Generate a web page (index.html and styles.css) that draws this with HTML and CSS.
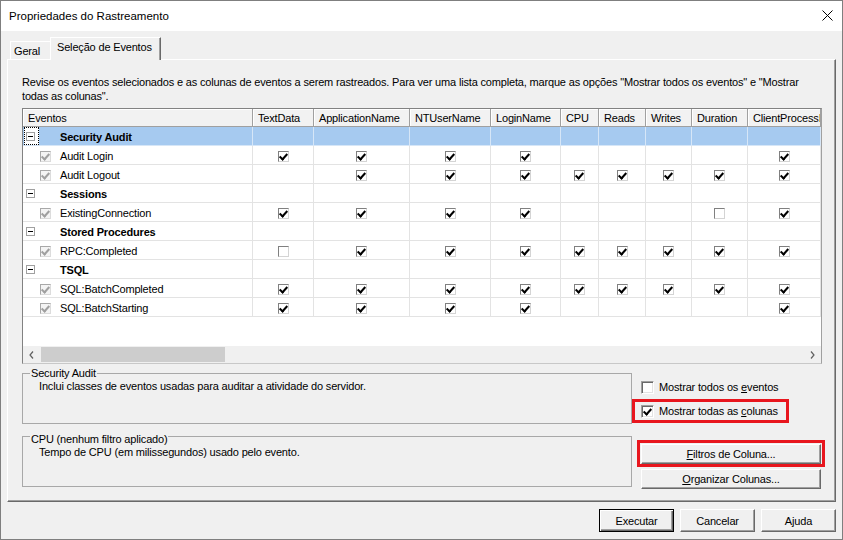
FILE: index.html
```html
<!DOCTYPE html>
<html lang="pt">
<head>
<meta charset="utf-8">
<title>Propriedades do Rastreamento</title>
<link rel="stylesheet" href="styles.css">
</head>
<body>
<div class="window">
  <div class="titlebar">
    <span class="title">Propriedades do Rastreamento</span>
    <svg class="close" width="11" height="11" viewBox="0 0 11 11"><path d="M0.5 0.5L10.5 10.5M10.5 0.5L0.5 10.5" stroke="#000" stroke-width="1" fill="none"/></svg>
  </div>
  <div class="tabs">
    <div class="tab">Geral</div>
    <div class="tab sel">Seleção de Eventos</div>
  </div>
  <div class="panel">
    <p class="desc">Revise os eventos selecionados e as colunas de eventos a serem rastreados. Para ver uma lista completa, marque as opções "Mostrar todos os eventos" e "Mostrar<br>todas as colunas".</p>
    <div class="grid">
      <div class="row head">
        <div>Eventos</div><div>TextData</div><div>ApplicationName</div><div>NTUserName</div><div>LoginName</div><div>CPU</div><div>Reads</div><div>Writes</div><div>Duration</div><div>ClientProcessID</div>
      </div>
      <div class="row sel">
        <div class="c0"><span class="exp focus"><span class="mn"></span></span><b class="gname">Security Audit</b></div><div></div><div></div><div></div><div></div><div></div><div></div><div></div><div></div><div></div>
      </div>
      <div class="row">
        <div class="c0"><span class="exp"></span><span class="cb dis on"></span><span class="nm">Audit Login</span></div><div><span class="cb on"></span></div><div><span class="cb on"></span></div><div><span class="cb on"></span></div><div><span class="cb on"></span></div><div></div><div></div><div></div><div></div><div><span class="cb on"></span></div>
      </div>
      <div class="row">
        <div class="c0"><span class="exp"></span><span class="cb dis on"></span><span class="nm">Audit Logout</span></div><div></div><div><span class="cb on"></span></div><div><span class="cb on"></span></div><div><span class="cb on"></span></div><div><span class="cb on"></span></div><div><span class="cb on"></span></div><div><span class="cb on"></span></div><div><span class="cb on"></span></div><div><span class="cb on"></span></div>
      </div>
      <div class="row">
        <div class="c0"><span class="exp"><span class="mn"></span></span><b class="gname">Sessions</b></div><div></div><div></div><div></div><div></div><div></div><div></div><div></div><div></div><div></div>
      </div>
      <div class="row">
        <div class="c0"><span class="exp"></span><span class="cb dis on"></span><span class="nm">ExistingConnection</span></div><div><span class="cb on"></span></div><div><span class="cb on"></span></div><div><span class="cb on"></span></div><div><span class="cb on"></span></div><div></div><div></div><div></div><div><span class="cb"></span></div><div><span class="cb on"></span></div>
      </div>
      <div class="row">
        <div class="c0"><span class="exp"><span class="mn"></span></span><b class="gname">Stored Procedures</b></div><div></div><div></div><div></div><div></div><div></div><div></div><div></div><div></div><div></div>
      </div>
      <div class="row">
        <div class="c0"><span class="exp"></span><span class="cb dis on"></span><span class="nm">RPC:Completed</span></div><div><span class="cb"></span></div><div><span class="cb on"></span></div><div><span class="cb on"></span></div><div><span class="cb on"></span></div><div><span class="cb on"></span></div><div><span class="cb on"></span></div><div><span class="cb on"></span></div><div><span class="cb on"></span></div><div><span class="cb on"></span></div>
      </div>
      <div class="row">
        <div class="c0"><span class="exp"><span class="mn"></span></span><b class="gname">TSQL</b></div><div></div><div></div><div></div><div></div><div></div><div></div><div></div><div></div><div></div>
      </div>
      <div class="row">
        <div class="c0"><span class="exp"></span><span class="cb dis on"></span><span class="nm">SQL:BatchCompleted</span></div><div><span class="cb on"></span></div><div><span class="cb on"></span></div><div><span class="cb on"></span></div><div><span class="cb on"></span></div><div><span class="cb on"></span></div><div><span class="cb on"></span></div><div><span class="cb on"></span></div><div><span class="cb on"></span></div><div><span class="cb on"></span></div>
      </div>
      <div class="row">
        <div class="c0"><span class="exp"></span><span class="cb dis on"></span><span class="nm">SQL:BatchStarting</span></div><div><span class="cb on"></span></div><div><span class="cb on"></span></div><div><span class="cb on"></span></div><div><span class="cb on"></span></div><div></div><div></div><div></div><div></div><div><span class="cb on"></span></div>
      </div>
      <div class="filler"></div>
      <div class="hscroll">
        <span class="arrow"><svg width="5" height="8" viewBox="0 0 5 8"><path d="M4 0.5L1 4L4 7.5" stroke="#606060" stroke-width="1.2" fill="none"/></svg></span>
        <span class="thumb"></span>
        <span class="track"></span>
        <span class="arrow"><svg width="5" height="8" viewBox="0 0 5 8"><path d="M1 0.5L4 4L1 7.5" stroke="#606060" stroke-width="1.2" fill="none"/></svg></span>
      </div>
    </div>
    <div class="lower">
      <div class="groups">
        <div class="grp">
          <span class="grp-title">Security Audit</span>
          <div class="grp-body">Inclui classes de eventos usadas para auditar a atividade do servidor.</div>
        </div>
        <div class="grp grp2">
          <span class="grp-title">CPU (nenhum filtro aplicado)</span>
          <div class="grp-body">Tempo de CPU (em milissegundos) usado pelo evento.</div>
        </div>
      </div>
      <div class="side">
        <div class="chk"><span class="lcb"></span><span class="label">Mostrar todos os <u>e</u>ventos</span></div>
        <div class="chk hl"><span class="lcb on"></span><span class="label">Mostrar todas as <u>c</u>olunas</span></div>
        <div class="btn-hl"><button class="btn"><span><u>F</u>iltros de Coluna...</span></button></div>
        <button class="btn org"><span><u>O</u>rganizar Colunas...</span></button>
      </div>
    </div>
  </div>
  <div class="footer">
    <button class="btn fb def">Executar</button>
    <button class="btn fb">Cancelar</button>
    <button class="btn fb">Ajuda</button>
  </div>
</div>
</body>
</html>
```
FILE: styles.css
```css
* { box-sizing: border-box; }
html, body { margin: 0; padding: 0; }
body { width: 843px; height: 540px; overflow: hidden; background: #f0f0f0; }

.window {
  width: 843px; height: 540px;
  border: 1px solid #7f7f7f;
  background: #f0f0f0;
  font-family: "Liberation Sans", Arial, sans-serif;
  font-size: 11px; color: #000;
  letter-spacing: -0.17px;
  display: flex; flex-direction: column;
}

.titlebar {
  height: 30px; flex: none; background: #fff;
  display: flex; align-items: center; justify-content: space-between;
  padding: 0 9px 0 8px;
}
.title { font-size: 11.5px; letter-spacing: 0; }
.close { display: block; margin-top: -1px; }

.tabs { height: 28px; flex: none; display: flex; align-items: flex-end; padding-left: 9px; }
.tab {
  height: 18px; width: 40px;
  border-top: 1px solid #fff; border-left: 1px solid #fff;
  padding: 1px 0 0 3px; line-height: 16px;
}
.tab.sel {
  width: 111px; height: 23px; margin-bottom: -1px;
  border-right: 1px solid #696969;
  box-shadow: inset -1px 0 0 #a0a0a0;
  padding: 2px 0 0 6px; line-height: 14px;
  position: relative; z-index: 1; background: #f0f0f0;
}

.panel {
  flex: none; margin-left: 6px; width: 829px; height: 443px;
  border: 1px solid; border-color: #fff #696969 #696969 #fff;
  box-shadow: inset -1px -1px 0 #a0a0a0;
  padding: 15px 0 0 14px;
}
.desc { margin: 0; line-height: 14px; white-space: nowrap; }

.grid {
  margin-top: 5px; width: 800px; height: 256px;
  border: 1px solid #828282; border-right-color: #a0a0a0; border-bottom-color: #c8c8c8;
  background: #fff; display: flex; flex-direction: column; overflow: hidden;
}
.row {
  display: grid;
  grid-template-columns: 230px 61px 96px 81px 70px 38px 47px 46px 56px 73px;
  height: 19px; flex: none;
}
.row > div {
  border-right: 1px solid #e3e3e3; border-bottom: 1px solid #e3e3e3;
  display: flex; align-items: center; justify-content: center;
  padding-top: 2px; min-width: 0;
}
.row > .c0 { justify-content: flex-start; padding-top: 0; }
.row.head { height: 18px; }
.row.head > div {
  background: #f2f2f2;
  border-right: 1px solid #a0a0a0; border-bottom: 1px solid #a0a0a0;
  box-shadow: inset 1px 1px 0 #fff;
  justify-content: flex-start; padding: 1px 0 0 5px;
  white-space: nowrap; overflow: hidden;
}
.row.sel > div { background: #a6caf0; border-right-color: #d6e6f7; border-bottom-color: #d6e6f7; }
.row.sel .exp { background: #fff; }

.exp {
  width: 15px; height: 18px; margin-left: 1px; flex: none;
  border: 1px dotted transparent;
  display: flex; align-items: center; padding-left: 1px;
}
.exp.focus { border-color: #000; }
.mn { width: 9px; height: 9px; border: 1px solid #a0a0a0; background: #fff; position: relative; }
.mn::after { content: ""; position: absolute; left: 1px; top: 3px; width: 5px; height: 1px; background: #000; }

.cb {
  width: 11px; height: 11px; flex: none;
  border: 1px solid; border-color: #808080 #d4d4d4 #d4d4d4 #808080;
  background: #fff; position: relative;
}
.cb.on::after {
  content: ""; position: absolute; left: 2px; top: 0;
  width: 3px; height: 6px;
  border: solid #000; border-width: 0 2px 2px 0;
  transform: rotate(42deg);
}
.cb.dis { background: #f4f4f4; border-color: #a8a8a8 #dcdcdc #dcdcdc #a8a8a8; }
.cb.dis.on::after { border-color: #a0a0a0; }
.c0 .cb { margin-left: 1px; margin-top: 2px; }
.nm { margin-left: 9px; margin-top: 2px; white-space: nowrap; }
.gname { margin-left: 21px; margin-top: 1px; white-space: nowrap; }

.filler { flex: 1; }
.hscroll { height: 17px; flex: none; background: #f0f0f0; display: flex; align-items: center; }
.arrow { width: 17px; height: 17px; flex: none; display: flex; align-items: center; justify-content: center; }
.arrow svg { display: block; }
.thumb { width: 184px; height: 15px; margin-left: 1px; background: #cdcdcd; flex: none; }
.track { flex: 1; }

.lower { display: flex; margin-top: 9px; }
.groups { width: 610px; flex: none; }
.grp { height: 51px; border: 1px solid #a8a8a8; }
.grp + .grp { margin-top: 12px; }
.grp-title {
  display: block; width: max-content;
  margin: -7px 0 0 7px; padding: 0 1px;
  background: #f0f0f0; line-height: 13px;
}
.grp2 .grp-title { margin-top: -4px; }
.grp-body { padding-left: 16px; line-height: 13px; }

.side { flex: none; width: 193px; padding-top: 2px; }
.chk {
  display: flex; align-items: center;
  width: 157px; height: 24px;
  border: 3px solid transparent; padding-left: 6px;
}
.chk.hl { border-color: #e8161e; }
.lcb {
  width: 13px; height: 13px; flex: none; position: relative;
  border: 1px solid; border-color: #a0a0a0 #fff #fff #a0a0a0;
  box-shadow: inset 1px 1px 0 #696969, inset -1px -1px 0 #e3e3e3;
  background: #fff;
}
.lcb.on::after {
  content: ""; position: absolute; left: 3px; top: 1px;
  width: 3px; height: 6px;
  border: solid #000; border-width: 0 2px 2px 0;
  transform: rotate(42deg);
}
.label { margin-left: 5px; white-space: nowrap; }

.btn-hl {
  margin: 17px 0 0 5px; width: 188px; height: 27px;
  border: 3px solid #e8161e; padding: 1px 0 0 1px;
}
.btn {
  height: 20px; width: 180px; padding: 0; margin: 0;
  background: #f0f0f0; color: #000;
  font: inherit; letter-spacing: inherit;
  border: 1px solid; border-color: #fff #696969 #696969 #fff;
  box-shadow: inset -1px -1px 0 #a0a0a0;
  display: flex; align-items: center; justify-content: center;
}
.btn.org { margin: 2px 0 0 9px; }

.footer { display: flex; justify-content: flex-end; gap: 6px; margin-top: 7px; padding-right: 6px; }
.btn.fb { width: 75px; height: 23px; }
.btn.def {
  border-color: #000;
  box-shadow: inset 1px 1px 0 #fff, inset -1px -1px 0 #696969, inset -2px -2px 0 #a0a0a0;
}
```
